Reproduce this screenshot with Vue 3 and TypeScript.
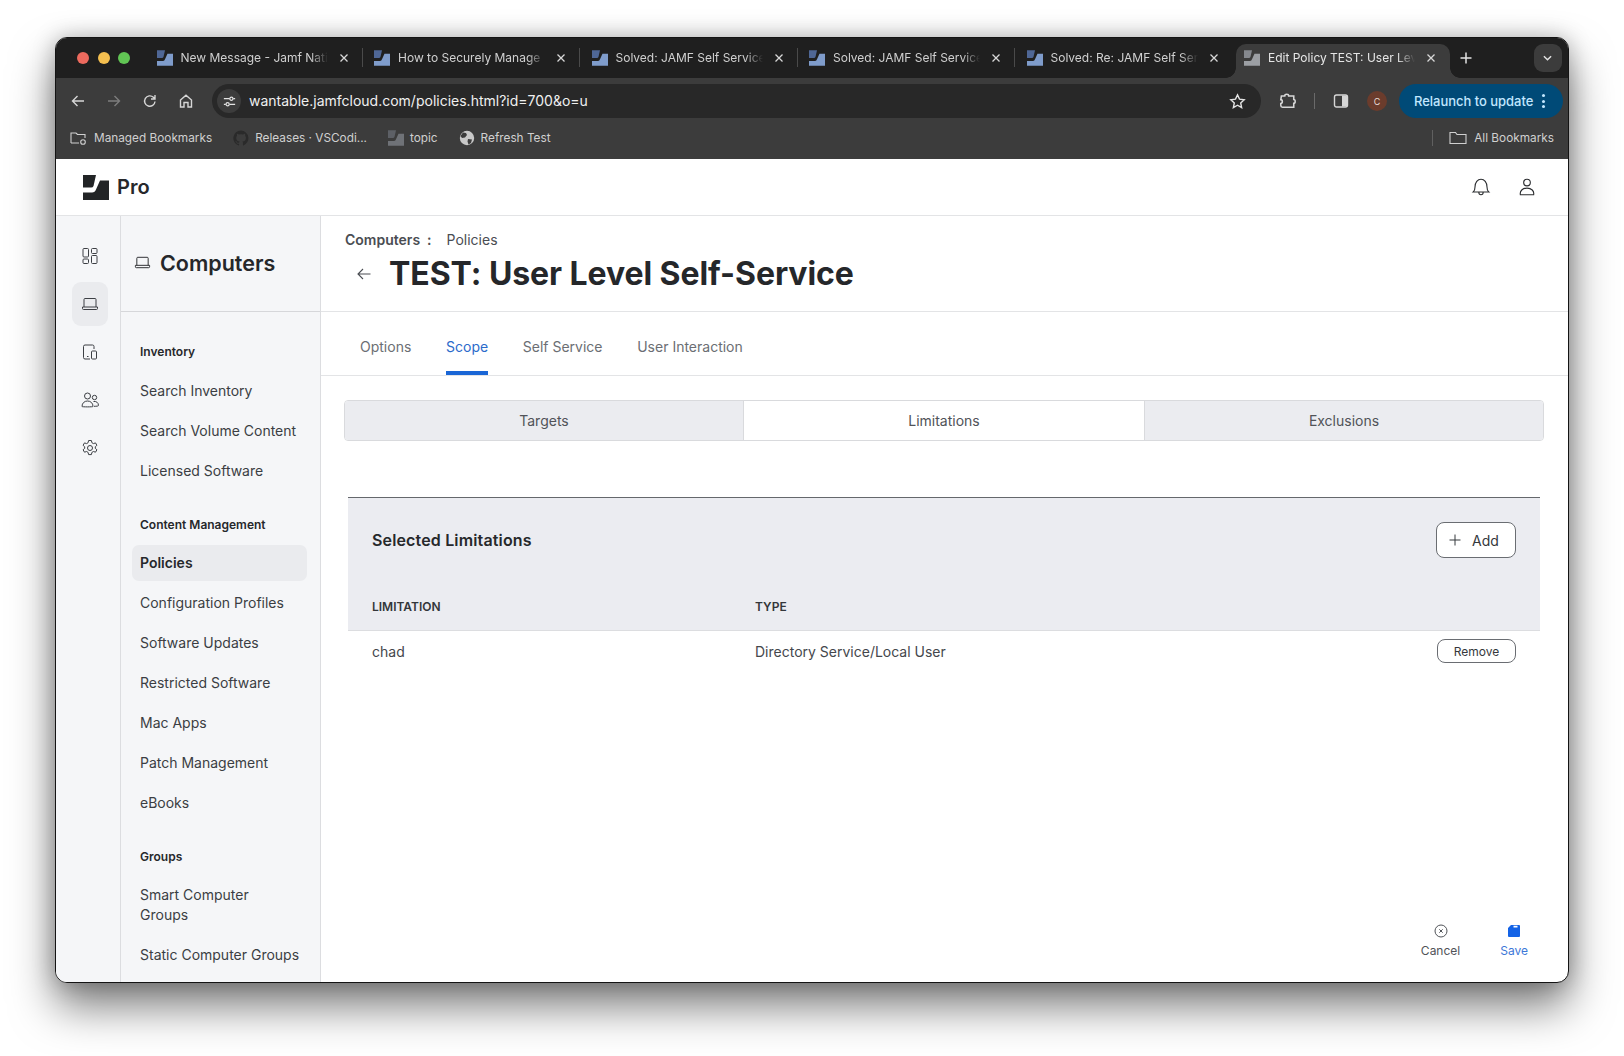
<script setup lang="ts">
const tabs = [
  { title: 'New Message - Jamf Nation Community', active: false },
  { title: 'How to Securely Manage Local Admin', active: false },
  { title: 'Solved: JAMF Self Service Login', active: false },
  { title: 'Solved: JAMF Self Service Login', active: false },
  { title: 'Solved: Re: JAMF Self Service Login', active: false },
  { title: 'Edit Policy TEST: User Level Self-Service', active: true },
]
const groups = [
  { name: 'Inventory', items: ['Search Inventory', 'Search Volume Content', 'Licensed Software'] },
  {
    name: 'Content Management',
    items: ['Policies', 'Configuration Profiles', 'Software Updates', 'Restricted Software', 'Mac Apps', 'Patch Management', 'eBooks'],
  },
  { name: 'Groups', items: ['Smart Computer\nGroups', 'Static Computer Groups'] },
]
const pageTabs = ['Options', 'Scope', 'Self Service', 'User Interaction']
const segments = ['Targets', 'Limitations', 'Exclusions']
</script>

<template>
  <div class="stage">
    <div class="window">
      <div class="strip">
        <div class="lights">
          <span class="light red"></span><span class="light yellow"></span><span class="light green"></span>
        </div>
        <div v-for="tab in tabs" :key="tab.title + tab.active" class="tab" :class="{ active: tab.active }">
          <svg class="favicon flat" viewBox="0 0 26 25">
            <path d="M0 0h13l-2.500 11Q10 12.500 8 12.500H0z" :fill="tab.active ? '#85888e' : '#4f6796'" />
            <path d="M17 5.500h9V25H0v-7.500h9q3 0 4-3z" :fill="tab.active ? '#9c9fa4' : '#7f9ccb'" />
          </svg>
          <span class="tab-title">{{ tab.title }}</span>
          <svg class="tab-close" viewBox="0 0 10 10"><path d="M1.500 1.500l7 7M8.500 1.500l-7 7" /></svg>
        </div>
        <svg class="plus" viewBox="0 0 12 12"><path d="M6 .5v11M.5 6h11" /></svg>
        <div class="tab-search">
          <svg viewBox="0 0 10 6"><path d="M1 1l4 4 4-4" /></svg>
        </div>
      </div>

      <div class="toolbar">
        <svg class="tool back" viewBox="0 0 16 16"><path d="M14 8H2.500M7.500 3L2.500 8l5 5" /></svg>
        <svg class="tool forward" viewBox="0 0 16 16"><path d="M2 8h11.500M8.500 3l5 5-5 5" /></svg>
        <svg class="tool reload" viewBox="0 0 16 16"><path d="M13 8.500A5.200 5.200 0 1 1 11.400 4.300L13 5.800M13 2v4H9" /></svg>
        <svg class="tool home" viewBox="0 0 16 16"><path d="M2.500 7L8 2.200 13.500 7v7H10V9.500H6V14H2.500z" /></svg>
        <div class="omnibox">
          <span class="site-info">
            <svg viewBox="0 0 16 16"><path d="M2 5h6M12 5h2M2 11h2M8 11h6" /><circle cx="10" cy="5" r="1.700" /><circle cx="6" cy="11" r="1.700" /></svg>
          </span>
          <span class="url">wantable.jamfcloud.com/policies.html?id=700&amp;o=u</span>
          <svg class="star" viewBox="0 0 16 16"><path d="M8 1.800l1.900 4 4.400.5-3.300 3 .9 4.400L8 11.500l-3.900 2.200.9-4.400-3.300-3 4.400-.5z" /></svg>
        </div>
        <svg class="tool ext" viewBox="0 0 16 16"><path d="M3 3.500h3c0-2 3.500-2 3.500 0H14v3.200c1.700 0 1.700 3.300 0 3.300V13.500H4c-1 0-1.500-.6-1.500-1.500v-1.800c1.800 0 1.800-3.400 0-3.400z" /></svg>
        <span class="tool-sep"></span>
        <svg class="tool panel-ic" viewBox="0 0 16 16"><rect x="1.500" y="2" width="13" height="12" rx="2" /><path class="fill" d="M9 2.500h4a1 1 0 0 1 1 1v9a1 1 0 0 1-1 1H9z" /></svg>
        <span class="avatar">C</span>
        <div class="relaunch">
          <span>Relaunch to update</span>
          <span class="dots"><i></i><i></i><i></i></span>
        </div>
      </div>

      <div class="bookmarks">
        <div class="bm first">
          <svg class="bm-ic wide" viewBox="0 0 18 16"><path d="M1 13V3h5l1.500 1.500H15V8M1 13h8" /><circle cx="13" cy="12" r="2.300" /></svg>
          <span>Managed Bookmarks</span>
        </div>
        <div class="bm">
          <svg class="bm-ic gh" viewBox="0 0 16 16"><path d="M8 .5a7.700 7.700 0 0 0-2.400 15c.4 0 .5-.2.500-.4v-1.400c-2.100.5-2.600-1-2.600-1-.3-.9-.8-1.100-.8-1.100-.7-.5 0-.5 0-.5.800 0 1.200.8 1.200.8.700 1.200 1.800.8 2.300.6 0-.5.300-.8.500-1-1.700-.2-3.500-.9-3.500-3.800 0-.8.300-1.500.8-2-.1-.2-.3-1 0-2 0 0 .7-.2 2.100.8a7 7 0 0 1 3.800 0c1.500-1 2.100-.8 2.100-.8.400 1 .2 1.800.1 2 .5.500.8 1.200.8 2 0 2.900-1.800 3.600-3.500 3.800.3.200.5.700.5 1.400v2.100c0 .2.100.5.500.4A7.700 7.700 0 0 0 8 .5z" /></svg>
          <span>Releases · VSCodi...</span>
        </div>
        <div class="bm">
          <svg class="bm-ic flat" viewBox="0 0 26 25">
            <path d="M0 0h13l-2.500 11Q10 12.500 8 12.500H0z" fill="#5d6066" />
            <path d="M17 5.500h9V25H0v-7.500h9q3 0 4-3z" fill="#6f7277" />
          </svg>
          <span>topic</span>
        </div>
        <div class="bm">
          <svg class="bm-ic flat" viewBox="0 0 16 16"><circle cx="8" cy="8" r="7.200" fill="#c8c8c8" /><path d="M4 2.500l3 .5 1 2-2 2.500-3 .5-1.500-2zM9 9l4 .5-1 3.500-2.500 1.500-1-3z" fill="#3c3c3c" /></svg>
          <span>Refresh Test</span>
        </div>
        <div class="bm-right">
          <span class="bm-sep"></span>
          <svg class="bm-ic wide" viewBox="0 0 18 14"><path d="M1 12.500v-11h5.500l1.500 2h9v9z" /></svg>
          <span>All Bookmarks</span>
        </div>
      </div>

      <header class="app-header">
        <svg class="logo flat" viewBox="0 0 26 25">
          <path d="M0 0h13l-2.500 11Q10 12.500 8 12.500H0z" fill="#222426" />
          <path d="M17 5.500h9V25H0v-7.500h9q3 0 4-3z" fill="#222426" />
        </svg>
        <span class="pro">Pro</span>
        <svg class="hd-ic bell" viewBox="0 0 18 18"><path d="M2 13.500c1.200-1 1.600-2 1.600-4.500C3.600 5 6 2 9 2s5.400 3 5.400 7c0 2.500.4 3.500 1.600 4.500zM7 13.500c0 3.300 4 3.300 4 0" /></svg>
        <svg class="hd-ic user" viewBox="0 0 18 18"><circle cx="9" cy="5" r="3" /><path d="M3 16c-.6-3.500 2-6 6-6s6.600 2.500 6 6z" /></svg>
      </header>

      <div class="app-body">
        <nav class="rail">
          <div class="rail-item">
            <svg viewBox="0 0 18 18"><rect x="2" y="1.500" width="5.500" height="8.500" rx="1" /><rect x="10.500" y="1.500" width="5.500" height="5" rx="1" /><rect x="2" y="12" width="5.500" height="4.500" rx="1" /><rect x="10.500" y="8.500" width="5.500" height="8" rx="1" /></svg>
          </div>
          <div class="rail-item selected">
            <svg viewBox="0 0 18 18"><path d="M3 12V4.500a1 1 0 0 1 1-1h10a1 1 0 0 1 1 1V12M1.500 12h15v1.500a1 1 0 0 1-1 1h-13a1 1 0 0 1-1-1z" /></svg>
          </div>
          <div class="rail-item">
            <svg viewBox="0 0 18 18"><path d="M9 16H4a1.500 1.500 0 0 1-1.500-1.500v-11A1.500 1.500 0 0 1 4 2h7.500A1.500 1.500 0 0 1 13 3.500V6" /><rect x="10.500" y="8" width="5" height="8" rx="1" /><path d="M6 13.500h1.500" /></svg>
          </div>
          <div class="rail-item">
            <svg viewBox="0 0 18 18"><circle cx="6.500" cy="5" r="3" /><circle cx="13.500" cy="6.500" r="2.200" /><path d="M1 15.500c0-3.500 2.500-5.500 5.500-5.500s5.500 2 5.500 5.500c0 .5-11 .5-11 0zM12.500 10.500c2.500-.5 5 1 5 4 0 .6-2 .8-4.500.8" /></svg>
          </div>
          <div class="rail-item">
            <svg viewBox="0 0 18 18"><circle cx="9" cy="9" r="2.500" /><path d="M7.600 1.500h2.800l.5 2.200 1.500.9 2.100-.7 1.400 2.400-1.600 1.500v1.500l1.600 1.500-1.400 2.400-2.100-.7-1.500.9-.5 2.200H7.600l-.5-2.200-1.500-.9-2.100.7-1.400-2.400 1.600-1.500V7.800L2.100 6.300l1.400-2.400 2.100.7 1.500-.9z" /></svg>
          </div>
        </nav>

        <aside class="sidebar">
          <div class="side-title">
            <svg viewBox="0 0 18 18"><path d="M3 12V4.500a1 1 0 0 1 1-1h10a1 1 0 0 1 1 1V12M1.500 12h15v1.500a1 1 0 0 1-1 1h-13a1 1 0 0 1-1-1z" /></svg>
            <span>Computers</span>
          </div>
          <div class="side-list">
            <section v-for="g in groups" :key="g.name" class="side-group">
              <h3>{{ g.name }}</h3>
              <a v-for="item in g.items" :key="item" class="side-item" :class="{ current: item === 'Policies' }">{{ item }}</a>
            </section>
          </div>
        </aside>

        <main class="main">
          <div class="page-head">
            <div class="crumbs"><b>Computers</b><span class="colon">:</span><span>Policies</span></div>
            <div class="title-row">
              <svg viewBox="0 0 14 12"><path d="M13.500 6H1M6 1L1 6l5 5" /></svg>
              <h1>TEST: User Level Self-Service</h1>
            </div>
          </div>

          <div class="page-tabs">
            <span v-for="t in pageTabs" :key="t" class="page-tab" :class="{ on: t === 'Scope' }">{{ t }}</span>
          </div>

          <div class="content">
            <div class="segments">
              <div v-for="s in segments" :key="s" class="segment" :class="{ on: s === 'Limitations' }">{{ s }}</div>
            </div>

            <div class="panel">
              <div class="panel-top">
                <h2>Selected Limitations</h2>
                <button class="add" type="button">
                  <svg viewBox="0 0 12 12"><path d="M6 .5v11M.5 6h11" /></svg>
                  Add
                </button>
              </div>
              <div class="cols">
                <span>LIMITATION</span>
                <span>TYPE</span>
              </div>
            </div>
            <div class="row">
              <span>chad</span>
              <span>Directory Service/Local User</span>
              <button class="remove" type="button">Remove</button>
            </div>
          </div>

          <footer class="actions">
            <div class="action">
              <svg viewBox="0 0 14 14"><circle cx="7" cy="7" r="6" /><path d="M5.300 5.300l3.400 3.400M8.700 5.300l-3.400 3.400" /></svg>
              <span>Cancel</span>
            </div>
            <div class="action save">
              <svg class="flat" viewBox="0 0 12 12"><path d="M3 0h8a1 1 0 0 1 1 1v10a1 1 0 0 1-1 1H1a1 1 0 0 1-1-1V3zM5.500 .8v1.700h4V.8z" fill="#1463e6" fill-rule="evenodd" /></svg>
              <span>Save</span>
            </div>
          </footer>
        </main>
      </div>
    </div>
  </div>
</template>

<style>
html,
body {
  margin: 0;
  height: 100%;
  overflow: hidden;
  background: #fff;
}
</style>

<style scoped>
* {
  box-sizing: border-box;
}
svg {
  display: block;
  flex: none;
  fill: none;
  stroke: currentColor;
}
svg.flat {
  stroke: none;
}
.stage {
  width: 1624px;
  height: 1056px;
  padding: 37px 55px 0;
  font-family: Inter, "Noto Sans", sans-serif;
  color: #33363a;
}
.window {
  width: 1514px;
  height: 946px;
  display: flex;
  flex-direction: column;
  border: 1px solid #141414;
  border-radius: 12px;
  overflow: hidden;
  background: #fff;
  box-shadow: 0 24px 44px rgba(0, 0, 0, 0.5), 0 0 22px rgba(0, 0, 0, 0.25);
}

/* tab strip */
.strip {
  height: 40px;
  flex: none;
  display: flex;
  align-items: flex-end;
  padding-left: 91px;
  background: #1f1f1f;
  color: #e3e3e3;
}
.lights {
  position: absolute;
  display: flex;
  gap: 8.500px;
  margin-left: -70px;
  margin-bottom: 14px;
}
.light {
  width: 12px;
  height: 12px;
  border-radius: 50%;
}
.red { background: #ed6a5e; }
.yellow { background: #f4bf4f; }
.green { background: #61c554; }
.tab {
  position: relative;
  width: 217.500px;
  height: 34px;
  display: flex;
  align-items: center;
  padding-left: 9.500px;
  font-size: 12px;
}
.tab::after {
  content: "";
  position: absolute;
  right: 2px;
  top: 4px;
  height: 19px;
  width: 1px;
  background: #4a4a4a;
}
.tab:nth-last-child(4)::after {
  display: none;
}
.tab.active {
  background: #3c3c3c;
  border-radius: 10px 10px 0 0;
  margin-left: 1px;
  width: 214px;
  padding-left: 8.500px;
}
.tab.active::before {
  content: "";
  position: absolute;
  left: -10px;
  bottom: 0;
  width: 10px;
  height: 10px;
  background: radial-gradient(circle at 0 0, transparent 9.500px, #3c3c3c 10px);
}
.tab.active::after {
  display: block;
  left: 100%;
  right: auto;
  top: auto;
  bottom: 0;
  width: 10px;
  height: 10px;
  background: radial-gradient(circle at 100% 0, transparent 9.500px, #3c3c3c 10px);
}
.favicon {
  width: 16px;
  height: 16px;
  margin-bottom: 7px;
}
.tab-title {
  width: 147px;
  margin-left: 8px;
  margin-bottom: 7px;
  white-space: nowrap;
  overflow: hidden;
  color: #d0d0d0;
  -webkit-mask-image: linear-gradient(90deg, #000 88%, transparent 100%);
  mask-image: linear-gradient(90deg, #000 88%, transparent 100%);
}
.tab.active .tab-title {
  color: #e6e6e6;
}
.tab-close {
  width: 10px;
  height: 10px;
  margin-left: 11px;
  margin-bottom: 7px;
  stroke: #d8d8d8;
  stroke-width: 1.300;
}
.plus {
  width: 12px;
  height: 12px;
  margin-left: 10px;
  margin-bottom: 14px;
  stroke: #e3e3e3;
  stroke-width: 1.500;
}
.tab-search {
  width: 28px;
  height: 28px;
  margin-left: 62px;
  margin-bottom: 6px;
  border-radius: 9px;
  background: #3c3c3c;
  display: flex;
  align-items: center;
  justify-content: center;
}
.tab-search svg {
  width: 9px;
  height: 6px;
  stroke: #e3e3e3;
  stroke-width: 1.600;
}

/* toolbar */
.toolbar {
  height: 40px;
  flex: none;
  display: flex;
  align-items: flex-end;
  padding-left: 14px;
  background: #3c3c3c;
  color: #d6d6d6;
}
.tool {
  width: 16px;
  height: 16px;
  margin-bottom: 9px;
  stroke-width: 1.400;
}
.tool.forward {
  margin-left: 20px;
  color: #7d7d7d;
}
.tool.reload {
  margin-left: 20px;
}
.tool.home {
  margin-left: 20px;
}
.omnibox {
  width: 1049px;
  height: 34px;
  margin-left: 18px;
  border-radius: 17px;
  background: #282828;
  display: flex;
  align-items: center;
  padding: 0 15px 0 5px;
}
.site-info {
  width: 24px;
  height: 24px;
  border-radius: 50%;
  background: #3c3c3c;
  display: flex;
  align-items: center;
  justify-content: center;
  color: #e3e3e3;
}
.site-info svg {
  width: 15px;
  height: 15px;
  stroke-width: 1.300;
}
.url {
  margin: 0 0 1px 8px;
  font-size: 14px;
  color: #f0f0f0;
  flex: 1;
}
.star {
  width: 17px;
  height: 17px;
  color: #e3e3e3;
  stroke-width: 1.300;
}
.ext {
  margin-left: 17px;
  width: 18px;
  height: 18px;
  margin-bottom: 8px;
}
.tool-sep {
  width: 1px;
  height: 16px;
  background: #6a6a6a;
  margin: 0 0 9px 18px;
}
.panel-ic {
  margin-left: 18px;
}
.panel-ic .fill {
  fill: currentColor;
  stroke: none;
}
.avatar {
  width: 20px;
  height: 20px;
  margin: 0 0 7px 18px;
  border-radius: 50%;
  background: #6b3c2c;
  color: #e9ddd8;
  font-size: 9px;
  display: flex;
  align-items: center;
  justify-content: center;
}
.relaunch {
  width: 164px;
  height: 34px;
  margin-left: 12px;
  border-radius: 17px;
  background: #004a77;
  color: #c2e7ff;
  font-size: 13px;
  font-weight: 500;
  letter-spacing: -0.03px;
  display: flex;
  align-items: center;
  padding-left: 15px;
}
.dots {
  display: flex;
  flex-direction: column;
  gap: 2.500px;
  margin-left: 9px;
}
.dots i {
  width: 3px;
  height: 3px;
  border-radius: 50%;
  background: #c2e7ff;
}

/* bookmarks */
.bookmarks {
  height: 41px;
  flex: none;
  display: flex;
  align-items: center;
  padding: 0 0 2px 14px;
  background: #3c3c3c;
  color: #d0d0d0;
  font-size: 11.800px;
}
.bm {
  display: flex;
  align-items: center;
  gap: 6px;
  margin-right: 21px;
}
.bm-ic {
  width: 16px;
  height: 16px;
  stroke-width: 1.100;
}
.bm-ic.wide {
  width: 18px;
}
.bm-ic.gh {
  fill: #2a2a2a;
  stroke: none;
}
.bm-right {
  margin-left: auto;
  display: flex;
  align-items: center;
  padding-right: 14px;
  gap: 7px;
}
.bm-sep {
  width: 1px;
  height: 16px;
  background: #606060;
  margin-right: 9px;
}

/* app */
.app-header {
  height: 57px;
  flex: none;
  display: flex;
  align-items: center;
  padding: 0 31px 0 27px;
  border-bottom: 1px solid #e3e4e6;
}
.logo {
  width: 26px;
  height: 25px;
}
.pro {
  margin-left: 8px;
  font-size: 20px;
  font-weight: 600;
  color: #26282b;
}
.hd-ic {
  width: 20px;
  height: 20px;
  color: #2c2e31;
  stroke-width: 1;
}
.bell {
  margin-left: auto;
}
.user {
  margin-left: 26px;
}
.app-body {
  flex: 1;
  min-height: 0;
  display: flex;
}
.rail {
  width: 65px;
  flex: none;
  background: #f5f6f8;
  border-right: 1px solid #dcdde0;
  padding: 18px 0 0 16px;
  display: flex;
  flex-direction: column;
  gap: 4px;
}
.rail-item {
  width: 36px;
  height: 44px;
  border-radius: 9px;
  display: flex;
  align-items: center;
  justify-content: center;
  color: #3c3f44;
}
.rail-item.selected {
  background: #eaebee;
}
.rail-item svg {
  width: 18px;
  height: 18px;
  stroke-width: 1;
  margin-top: -1px;
}
.sidebar {
  width: 200px;
  flex: none;
  background: #f5f6f8;
  border-right: 1px solid #dcdde0;
  overflow: hidden;
}
.side-title {
  height: 96px;
  display: flex;
  align-items: center;
  padding: 0 0 2px 13px;
  gap: 9px;
  border-bottom: 1px solid #d6d7da;
  color: #25272a;
  font-size: 21.500px;
  font-weight: 600;
}
.side-title svg {
  width: 17px;
  height: 17px;
  stroke-width: 1;
}
.side-list {
  padding: 0 13px 0 11px;
}
.side-group {
  display: flex;
  flex-direction: column;
  gap: 4px;
  padding-top: 26px;
}
.side-group:first-child {
  padding-top: 30px;
}
.side-group h3 {
  margin: 0 0 7px;
  padding-left: 8px;
  font-size: 12px;
  line-height: 20px;
  font-weight: 600;
  color: #26282b;
}
.side-group + .side-group h3 {
  margin-bottom: 6px;
}
.side-item {
  display: block;
  padding: 8px 0 8px 8px;
  line-height: 20px;
  font-size: 14px;
  color: #3b3e43;
  border-radius: 7px;
  white-space: pre;
}
.side-item.current {
  background: #eaebee;
  font-weight: 600;
  color: #26282b;
}
.main {
  flex: 1;
  min-width: 0;
  display: flex;
  flex-direction: column;
}
.page-head {
  height: 96px;
  flex: none;
  padding: 14px 0 0 24px;
  border-bottom: 1px solid #e3e4e6;
}
.crumbs {
  display: flex;
  font-size: 14px;
  line-height: 20px;
  color: #4a4d52;
}
.crumbs b {
  font-weight: 600;
}
.colon {
  margin: 0 15px 0 7px;
  font-weight: 600;
}
.title-row {
  display: flex;
  align-items: center;
  margin-top: 5px;
  height: 38px;
}
.title-row svg {
  width: 14px;
  height: 12px;
  margin-left: 12px;
  color: #4a4d52;
  stroke-width: 1.100;
}
.title-row h1 {
  margin: 0 0 0 18px;
  font-size: 32px;
  line-height: 38px;
  font-weight: 700;
  letter-spacing: -0.07px;
  color: #25272a;
}
.page-tabs {
  height: 64px;
  flex: none;
  display: flex;
  padding-left: 39px;
  gap: 34.700px;
  border-bottom: 1px solid #e3e4e6;
}
.page-tab {
  height: 63px;
  padding-top: 25px;
  font-size: 14px;
  line-height: 20px;
  color: #6b6e73;
}
.page-tab.on {
  color: #2b6bcb;
  border-bottom: 4px solid #1a66d6;
}
.content {
  flex: 1;
  min-height: 0;
  padding: 24px 24px 0 23px;
}
.segments {
  display: grid;
  grid-template-columns: 398px 401px 1fr;
  height: 41px;
  border: 1px solid #d9dadd;
  border-radius: 4px;
  overflow: hidden;
}
.segment {
  display: flex;
  align-items: center;
  justify-content: center;
  background: #ebecf0;
  font-size: 14px;
  color: #505358;
}
.segment + .segment {
  border-left: 1px solid #d9dadd;
}
.segment.on {
  background: #fff;
}
.panel {
  margin: 56px 4px 0;
  height: 134px;
  background: #ebecf1;
  border-top: 1px solid #65686c;
  border-bottom: 1px solid #dcdde0;
}
.panel-top {
  display: flex;
  align-items: center;
  justify-content: space-between;
  padding: 24px 24px 0;
}
.panel-top h2 {
  margin: 0;
  font-size: 16px;
  font-weight: 600;
  letter-spacing: 0.15px;
  color: #26282b;
}
.add {
  width: 80px;
  height: 36px;
  display: flex;
  align-items: center;
  justify-content: center;
  gap: 11px;
  padding: 0 4px 0 0;
  background: #fff;
  border: 1px solid #6a6d72;
  border-radius: 8px;
  font: 14px Inter, sans-serif;
  color: #35383c;
}
.add svg {
  width: 12px;
  height: 12px;
  stroke-width: 1;
}
.cols {
  display: grid;
  grid-template-columns: 383px 1fr;
  padding: 41px 24px 0;
  font-size: 12px;
  line-height: 16px;
  font-weight: 600;
  color: #33363a;
}
.row {
  margin: 0 4px;
  height: 40px;
  display: grid;
  grid-template-columns: 383px 1fr auto;
  align-items: center;
  padding: 0 24px;
  font-size: 14px;
  color: #44474c;
}
.remove {
  width: 79px;
  height: 24px;
  background: #fff;
  border: 1px solid #6a6d72;
  border-radius: 8px;
  font: 12px Inter, sans-serif;
  color: #35383c;
}
.actions {
  flex: none;
  display: flex;
  justify-content: flex-end;
  gap: 40px;
  padding: 0 40px 23px 0;
}
.action {
  display: flex;
  flex-direction: column;
  align-items: center;
  gap: 5px;
  font-size: 12px;
  line-height: 16px;
  color: #505358;
}
.action svg {
  width: 14px;
  height: 14px;
  stroke-width: 1;
}
.action.save {
  color: #3d78d8;
}
.action.save svg {
  width: 12px;
  height: 12px;
  margin: 1px 0;
}
</style>
